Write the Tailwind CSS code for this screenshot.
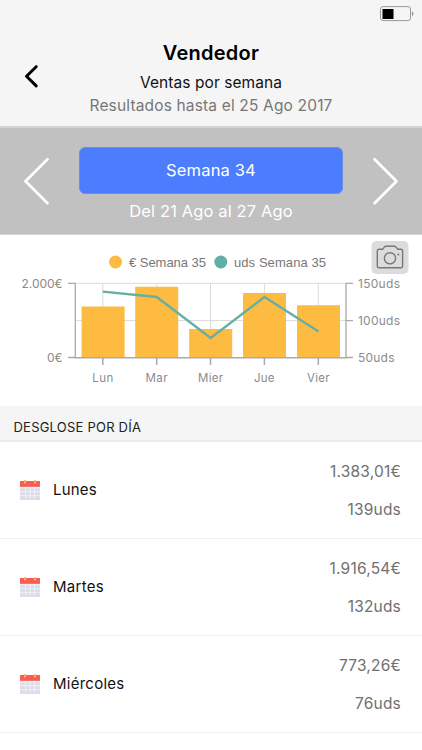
<!DOCTYPE html>
<html lang="es">
<head>
<meta charset="utf-8">
<meta name="viewport" content="width=device-width, initial-scale=1">
<title>Vendedor</title>
<script src="https://cdn.jsdelivr.net/npm/@tailwindcss/browser@4"></script>
</head>
<body class="h-[750px] w-[422px] overflow-hidden bg-white font-[Inter,'Liberation_Sans',sans-serif] text-[#111]">
<svg class="hidden">
  <symbol id="calendar" viewBox="0 0 20 20">
    <rect y="1" width="20" height="19" fill="#dbdde8"/>
    <path d="M0 7.8H20M0 11.7H20M0 15.7H20M5.5 7V18.5M10 7V18.5M14.5 7V18.5" stroke="#f2f3f8" stroke-width=".9"/>
    <rect y="1" width="20" height="5.8" fill="#fa5d57"/>
    <path d="M5 0V3.6M15 0V3.6" stroke="#fdbb55" stroke-width="1.8"/>
  </symbol>
</svg>

<header class="flex h-[128px] flex-col border-b-2 border-[#d2d2d2] bg-[#f5f5f5]">
  <div class="flex h-[28px] justify-end pt-[6px] pr-[7px]">
    <svg class="h-[16px] w-[35px]" viewBox="0 0 35 16" fill="none">
      <rect x=".5" y=".6" width="30" height="14" rx="2.5" stroke="#999"/>
      <rect x="2.5" y="3" width="11" height="10" fill="#000"/>
      <path d="M32 5.3Q34.8 7.8 32 10.3Z" fill="#888"/>
    </svg>
  </div>
  <div class="grid grid-cols-[80px_262px_80px] pt-[11px]">
    <div class="pt-[25px] pl-[23px]">
      <svg class="h-[25px] w-[17px]" viewBox="0 0 17 25" fill="none" stroke="#000" stroke-width="3" stroke-linecap="round" stroke-linejoin="round"><path d="M13.2 2.7L3.5 12.3L13.2 21.9"/></svg>
    </div>
    <div class="flex flex-col items-center whitespace-nowrap">
      <h1 class="h-[28px] text-[20px] leading-[28px] font-semibold tracking-[0.25px] text-black"><span>Vendedor</span></h1>
      <p class="mt-[5px] text-[15.5px] leading-[22px] tracking-[0.08px]"><span>Ventas por semana</span></p>
      <p class="mt-px text-[15.5px] leading-[22px] tracking-[0.16px] text-[#777]"><span>Resultados hasta el 25 Ago 2017</span></p>
    </div>
  </div>
</header>

<section class="grid h-[107px] grid-cols-[79px_264px_79px] border-b border-[#d8d8d8] bg-[#c1c1c1] pt-[19px] text-white">
  <div class="pt-[8px] pl-[22px]">
    <svg class="h-[52px] w-[30px]" viewBox="0 0 30 52" fill="none" stroke="#fff" stroke-width="2.7" stroke-linecap="round" stroke-linejoin="round"><path d="M25.5 4.2L3.5 26.2L25.5 48.2"/></svg>
  </div>
  <div class="flex flex-col items-center whitespace-nowrap">
    <button class="h-[47px] w-[264px] rounded-[6px] border border-[#6c8ee0] bg-[#4b7dfe] text-[16.5px] tracking-[0.15px]"><span>Semana 34</span></button>
    <p class="mt-[5px] text-[16.5px] leading-[24px] tracking-[0.12px]"><span>Del 21 Ago al 27 Ago</span></p>
  </div>
  <div class="pt-[8px] pl-[28px]">
    <svg class="h-[52px] w-[30px]" viewBox="0 0 30 52" fill="none" stroke="#fff" stroke-width="2.7" stroke-linecap="round" stroke-linejoin="round"><path d="M3.5 4.2L25.5 26.2L3.5 48.2"/></svg>
  </div>
</section>

<section class="h-[171px] bg-white">
  <svg class="block h-[171px] w-[422px]" viewBox="0 235 422 171" fill="none">
    <circle cx="115.5" cy="262" r="6.5" fill="#febb42"/>
    <circle cx="220.8" cy="262" r="6.5" fill="#63afa8"/>
    <g font-family="'Liberation Sans', sans-serif" font-size="13" fill="#777">
      <text x="129" y="267" textLength="77">€ Semana 35</text>
      <text x="234" y="267" textLength="92">uds Semana 35</text>
    </g>
    <rect x="371.5" y="241" width="37" height="33" rx="5" fill="#dcdcdc"/>
    <g stroke="#777" stroke-width="1.4" stroke-linejoin="round">
      <path d="M379 249.3H382.6L384.4 246.9Q385 246.2 386 246.2H394.2Q395.2 246.2 395.8 246.9L397.8 249.3H400.8Q402.6 249.3 402.6 251V266.2Q402.6 267.8 400.9 267.8H379Q377.3 267.8 377.3 266.2V251Q377.3 249.3 379 249.3Z"/>
      <circle cx="390" cy="258.3" r="5.6"/>
    </g>
    <circle cx="398.4" cy="254.5" r="1" fill="#777"/>
    <path d="M76 283.3H346M76 320.6H346M102.8 283V357M156.7 283V357M210.5 283V357M264.4 283V357M318.3 283V357" stroke="#dadada"/>
    <path d="M81.6 306.4h43V357.5h-43zM135.2 286.7h43V357.5h-43zM189.2 329h43V357.5h-43zM243 293h43V357.5h-43zM297 305.3h43V357.5h-43z" fill="#febb42"/>
    <path d="M68 283.3H75.3V357.8M68 357.5H76M353 283.3H346V357.8M346 320.6H353M346 357.5H353" stroke="#aaa" stroke-width="1.3"/>
    <path d="M75 357.8H346.5M102.8 358V365M156.7 358V365M210.5 358V365M264.4 358V365M318.3 358V365" stroke="#aaa" stroke-width="1.5"/>
    <path d="M102.8 291.6L156.7 297L210.7 338L264.5 297L318.5 331.5" stroke="#65afa5" stroke-width="2.4"/>
    <g font-family="Inter, sans-serif" font-size="12" fill="#8b8b8b">
      <text x="21.5" y="288" textLength="41">2.000€</text>
      <text x="47" y="362" textLength="15.5">0€</text>
      <text x="358" y="288" textLength="42">150uds</text>
      <text x="358" y="325" textLength="42">100uds</text>
      <text x="358" y="362" textLength="36.5">50uds</text>
      <text x="92.3" y="382.3" textLength="21" font-size="11.5">Lun</text>
      <text x="145.5" y="382.3" textLength="22" font-size="11.5">Mar</text>
      <text x="198" y="382.3" textLength="25" font-size="11.5">Mier</text>
      <text x="254" y="382.3" textLength="20.5" font-size="11.5">Jue</text>
      <text x="307" y="382.3" textLength="22.5" font-size="11.5">Vier</text>
    </g>
  </svg>
</section>

<h2 class="flex h-[36px] items-center border-b-2 border-[#ececec] bg-[#f5f5f5] pt-[8px] pl-[13.5px] text-[13px] leading-[20px] tracking-[0.22px] text-[#222]"><span>DESGLOSE POR DÍA</span></h2>

<ul class="text-[15.5px] tracking-[0.2px]">
  <li class="flex h-[97px] border-b border-[#f1f1f1] pr-[21px] pl-[20px]">
    <svg class="mt-[38px] h-[20px] w-[20px]"><use href="#calendar"/></svg>
    <span class="mt-[36px] ml-[13px] flex-1 text-[15px] leading-[24px]">Lunes</span>
    <div class="pt-[18px] text-right leading-[24px] text-[#707070]"><p>1.383,01€</p><p class="mt-[14px]">139uds</p></div>
  </li>
  <li class="flex h-[97px] border-b border-[#f1f1f1] pr-[21px] pl-[20px]">
    <svg class="mt-[38px] h-[20px] w-[20px]"><use href="#calendar"/></svg>
    <span class="mt-[36px] ml-[13px] flex-1 text-[15px] leading-[24px] tracking-[0.3px]">Martes</span>
    <div class="pt-[18px] text-right leading-[24px] text-[#707070]"><p>1.916,54€</p><p class="mt-[14px]">132uds</p></div>
  </li>
  <li class="flex h-[97px] border-b border-[#f1f1f1] pr-[21px] pl-[20px]">
    <svg class="mt-[38px] h-[20px] w-[20px]"><use href="#calendar"/></svg>
    <span class="mt-[36px] ml-[13px] flex-1 text-[15px] leading-[24px] tracking-[0.25px]">Miércoles</span>
    <div class="pt-[18px] text-right leading-[24px] text-[#707070]"><p>773,26€</p><p class="mt-[14px]">76uds</p></div>
  </li>
</ul>
</body>
</html>
